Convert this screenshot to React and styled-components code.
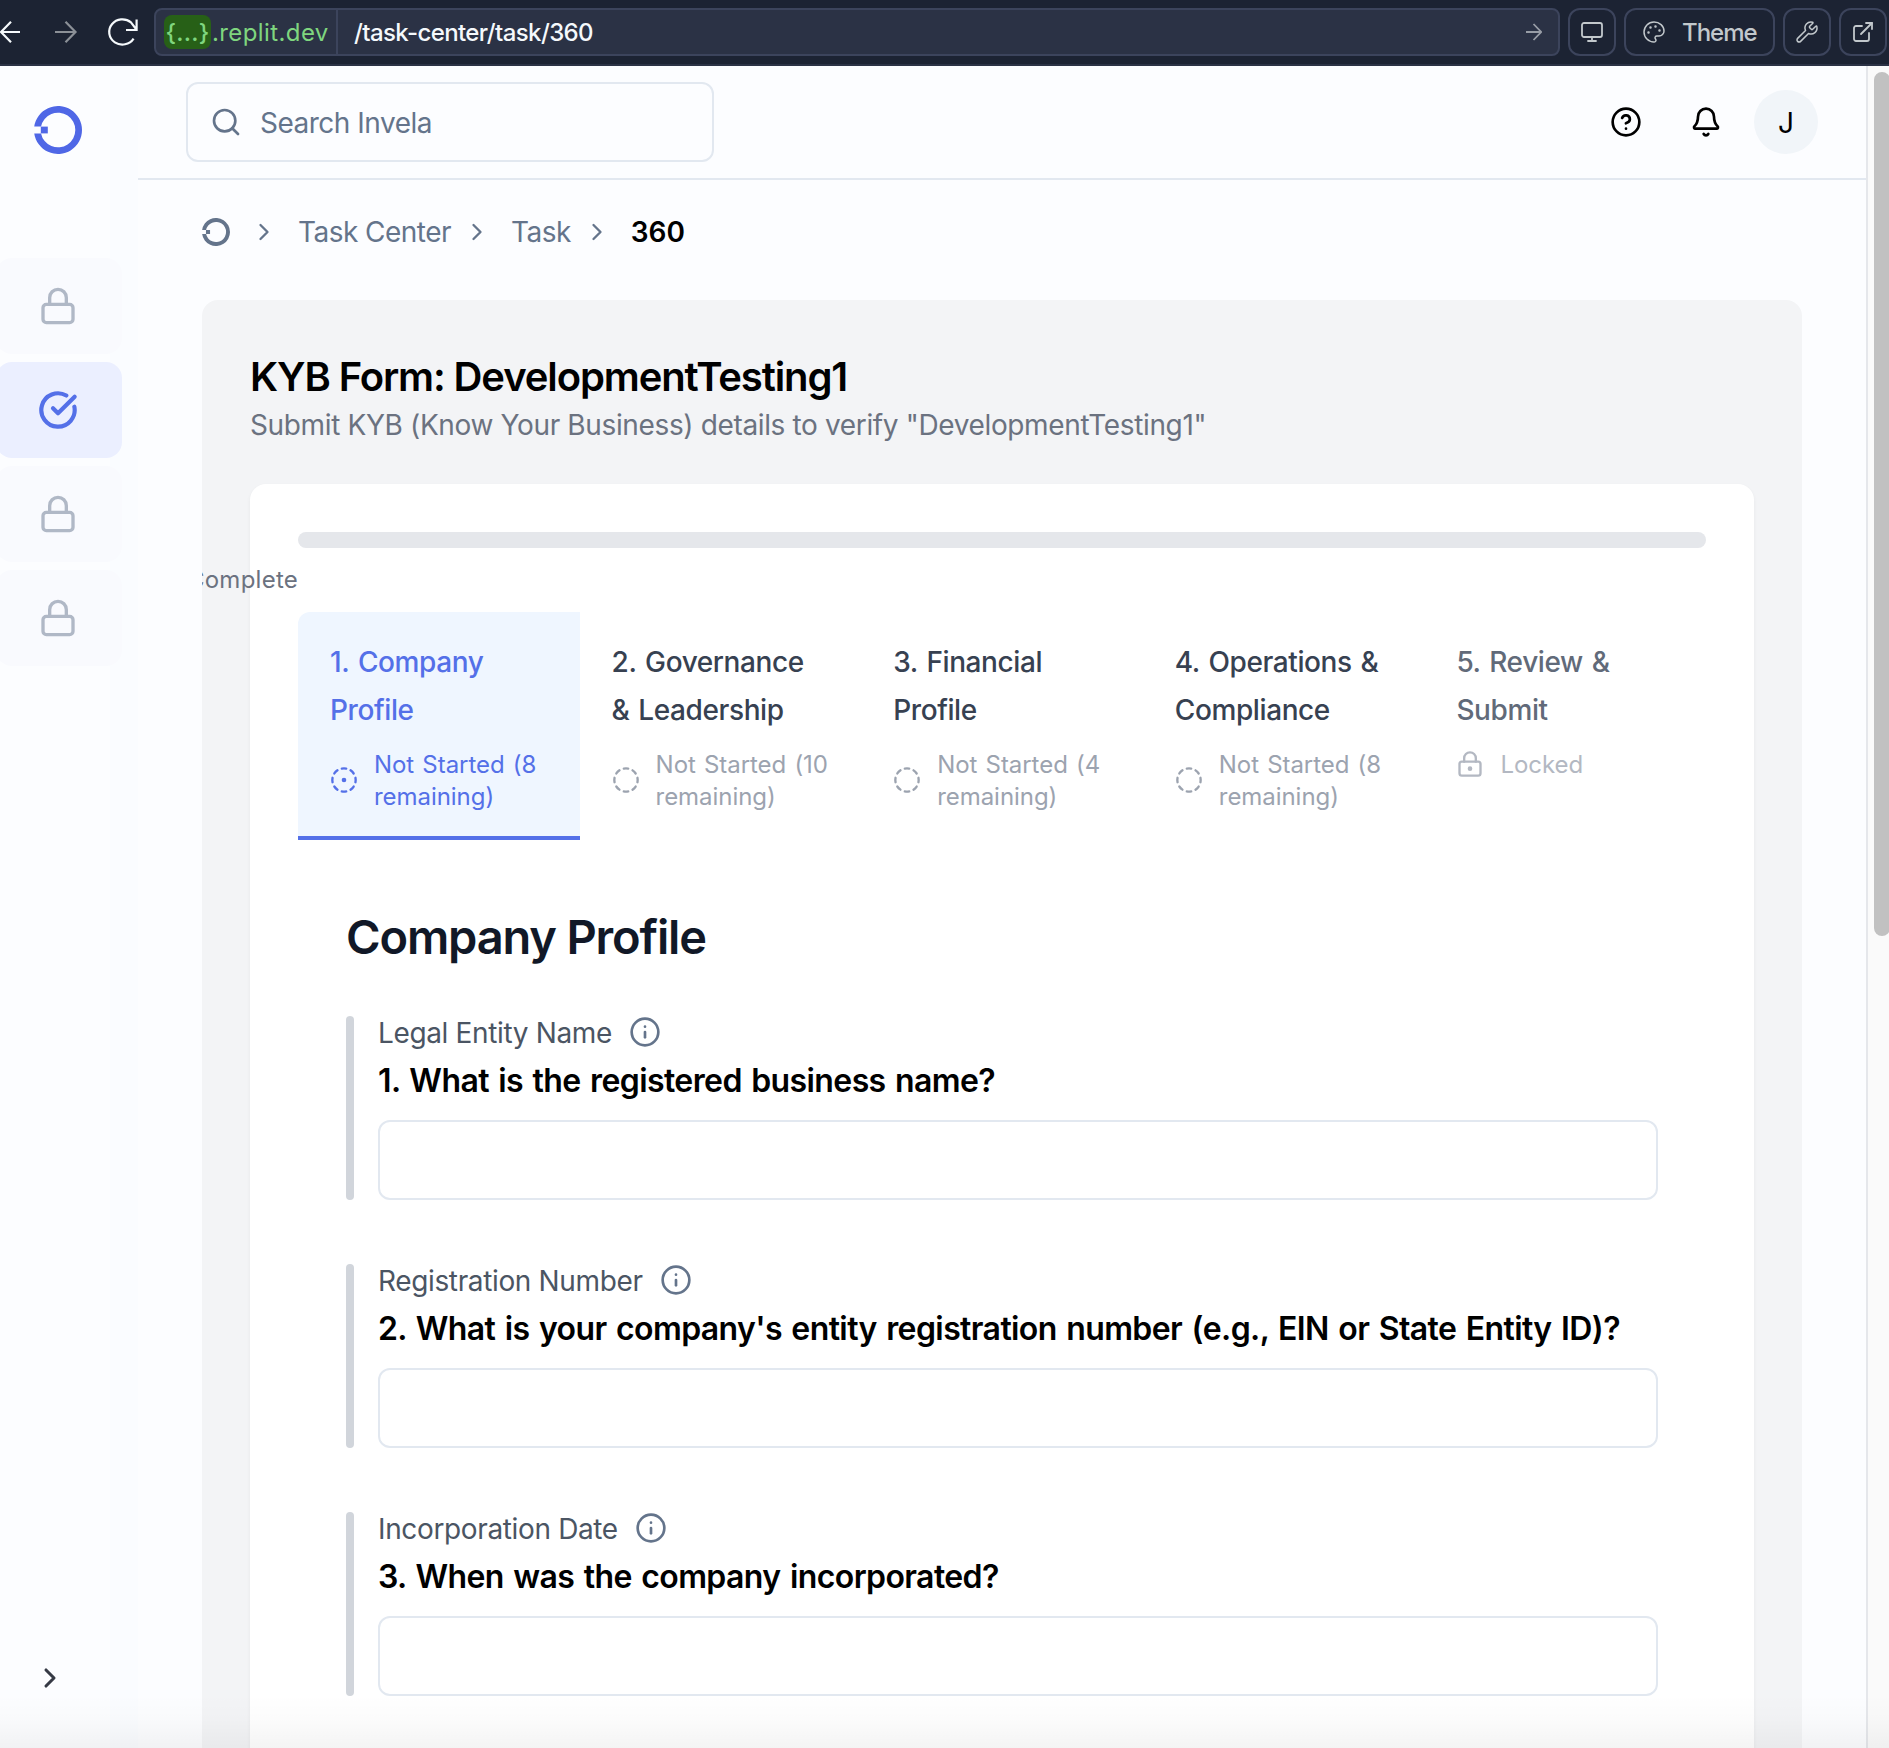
import React from "react";
import styled, { createGlobalStyle, css } from "styled-components";
import {
  Bell,
  ChevronRight,
  CircleCheckBig,
  CircleDashed,
  CircleDotDashed,
  CircleHelp,
  ExternalLink,
  Info,
  Lock,
  LockKeyhole,
  Monitor,
  Palette,
  Search,
  Wrench,
} from "lucide-react";

const GlobalStyle = createGlobalStyle`
  *, *::before, *::after { box-sizing: border-box; }
  body {
    margin: 0;
    overflow: hidden;
    background: #fcfdff;
    color: #000;
    font-family: Inter, "Liberation Sans", sans-serif;
  }
  svg { display: block; flex-shrink: 0; }
  h1, h2, p { margin: 0; }
`;

const Window = styled.div`
  display: flex;
  flex-direction: column;
  width: 1889px;
  height: 1748px;
  overflow: hidden;
  position: relative;
`;

/* ---------- Browser bar ---------- */

const BrowserBar = styled.header`
  display: flex;
  align-items: center;
  flex: none;
  height: 66px;
  padding: 0 2px 0 0;
  background: #1c2333;
  border-bottom: 2px solid #2b3245;
`;

const NavIcons = styled.div`
  width: 154px;
  flex: none;
`;

const AddressBar = styled.div`
  display: flex;
  align-items: center;
  flex: 1;
  height: 48px;
  margin-right: 8px;
  background: #2b3245;
  border: 2px solid #3c445c;
  border-radius: 8px;
  font-size: 24px;
  font-weight: 500;
  overflow: hidden;
`;

const Host = styled.div`
  display: flex;
  align-items: center;
  gap: 1px;
  width: 182px;
  height: 100%;
  padding-left: 8px;
  border-right: 2px solid #3c445c;
  color: #7fd67f;
  font-weight: 400;
  letter-spacing: 0.4px;
`;

const HostPill = styled.span`
  display: flex;
  align-items: center;
  justify-content: center;
  width: 47px;
  height: 34px;
  border-radius: 8px;
  background: #276017;
  font-weight: 500;
  letter-spacing: 0.2px;
`;

const Path = styled.span`
  flex: 1;
  padding: 1px 0 0 16px;
  color: #f5f9fc;
  letter-spacing: -0.6px;
`;

const HostName = styled.span`
  padding-top: 1px;
`;

const GoIcon = styled.div`
  padding-right: 16px;
`;

const BarButtons = styled.div`
  display: flex;
  gap: 8px;
`;

const BarButton = styled.button`
  display: flex;
  align-items: center;
  justify-content: ${(p) => (p.$wide ? "flex-start" : "center")};
  gap: 16px;
  width: ${(p) => (p.$wide ? 151 : 48)}px;
  height: 48px;
  padding: ${(p) => (p.$wide ? "0 0 0 16px" : 0)};
  border: 2px solid #3c445c;
  border-radius: 12px;
  background: transparent;
  color: #c2c8cc;
  font: 500 24px Inter, sans-serif;
  letter-spacing: -1px;
`;

const ButtonText = styled.span`
  padding-top: 1px;
`;

/* ---------- App shell ---------- */

const Shell = styled.div`
  display: flex;
  flex: 1;
  min-height: 0;
`;

const Sidebar = styled.aside`
  display: flex;
  flex-direction: column;
  flex: none;
  width: 138px;
  background: linear-gradient(to right, #fcfdff 0 110px, #fafcff 110px);
`;

const SidebarLogo = styled.div`
  padding: 40px 0 104px 34px;
`;

const SidebarNav = styled.nav`
  display: flex;
  flex-direction: column;
  gap: 8px;
`;

const SidebarItem = styled.div`
  display: flex;
  align-items: center;
  width: 126px;
  height: 96px;
  margin-left: -4px;
  padding-left: 42px;
  border-radius: 16px;
  background: ${(p) => (p.$active ? "#ebefff" : "#f9fafe")};
  color: ${(p) => (p.$active ? "#5470e8" : "#b0b8c6")};
`;

const SidebarToggle = styled.div`
  margin-top: auto;
  padding: 0 0 54px 34px;
  color: #363a45;
`;

const Main = styled.main`
  display: flex;
  flex-direction: column;
  flex: 1;
  min-width: 0;
  border-right: 2px solid #e5e7eb;
`;

const ScrollTrack = styled.div`
  flex: none;
  width: 21px;
  padding: 6px 0 0 6px;
  background: #fafafa;
`;

const ScrollThumb = styled.div`
  width: 16px;
  height: 864px;
  border-radius: 8px;
  background: #c1c1c1;
`;

const TopBar = styled.div`
  display: flex;
  align-items: center;
  flex: none;
  height: 114px;
  padding: 0 48px;
  border-bottom: 2px solid #e2e8f0;
`;

const SearchBox = styled.div`
  display: flex;
  align-items: center;
  gap: 18px;
  width: 528px;
  height: 80px;
  padding-left: 22px;
  border: 2px solid #e2e8f0;
  border-radius: 12px;
  color: #64748b;
  font-size: 28px;
  letter-spacing: -0.5px;
`;

const SearchText = styled.span`
  padding-top: 2px;
`;

const TopActions = styled.div`
  display: flex;
  align-items: center;
  gap: 48px;
  margin-left: auto;
`;

const Avatar = styled.div`
  display: flex;
  align-items: center;
  justify-content: center;
  width: 64px;
  height: 64px;
  margin-left: -16px;
  padding-top: 1px;
  border-radius: 50%;
  background: #f1f5f9;
  font-size: 28px;
`;

const Breadcrumbs = styled.nav`
  display: flex;
  align-items: center;
  flex: none;
  height: 104px;
  padding-left: 64px;
  color: #64748b;
  font-size: 28px;
  letter-spacing: -0.53px;
`;

const Crumb = styled.span`
  margin-left: ${(p) => p.$gap}px;
  ${(p) =>
    p.$current &&
    css`
      color: #000;
      font-weight: 600;
      letter-spacing: 0;
    `}
`;

const CrumbArrow = styled.span`
  margin-left: ${(p) => p.$gap}px;
`;

/* ---------- Task panel ---------- */

const Panel = styled.section`
  flex: 1;
  margin: 16px 64px 0;
  padding: 48px 48px 0;
  border-radius: 16px 16px 0 0;
  background: #f3f4f6;
  overflow: hidden;
`;

const PanelTitle = styled.h1`
  padding-top: 1px;
  font-size: 40px;
  line-height: 56px;
  font-weight: 600;
  letter-spacing: -1.12px;
`;

const PanelSubtitle = styled.p`
  margin-bottom: 39px;
  padding-top: 1px;
  color: #6b7280;
  font-size: 28px;
  line-height: 39px;
  letter-spacing: -0.36px;
`;

const Card = styled.div`
  height: 1400px;
  padding: 48px;
  border-radius: 16px;
  background: #fff;
  box-shadow: 0 2px 4px rgba(0, 0, 0, 0.05);
`;

const ProgressTrack = styled.div`
  height: 16px;
  border-radius: 8px;
  background: #e5e7eb;
`;

const ProgressLabel = styled.div`
  display: flex;
  justify-content: flex-end;
  width: 0;
  height: 32px;
  margin: 16px 0;
  color: #6b7280;
  font-size: 24px;
  line-height: 32px;
  letter-spacing: 0.25px;
  white-space: nowrap;
`;

const Steps = styled.div`
  display: grid;
  grid-template-columns: repeat(5, 1fr);
  height: 228px;
`;

const Step = styled.div`
  padding: 26px 32px 0;
  border-bottom: 4px solid ${(p) => (p.$state === "active" ? "#5470e8" : "transparent")};
  border-top-left-radius: ${(p) => (p.$state === "active" ? 12 : 0)}px;
  background: ${(p) => (p.$state === "active" ? "#eff6ff" : "transparent")};
  color: ${(p) => ({ active: "#5470e8", locked: "#616a79" })[p.$state] || "#374151"};
`;

const StepTitle = styled.div`
  font-size: 28px;
  line-height: 48px;
  font-weight: 500;
  letter-spacing: -0.4px;
  word-spacing: 1.8px;
  white-space: pre;
`;

const StepStatus = styled.div`
  display: flex;
  align-items: center;
  gap: 16px;
  margin-top: 14px;
  color: ${(p) => ({ active: "#5470e8", locked: "#b3b8c2" })[p.$state] || "#9ca3af"};
  font-size: 24px;
  line-height: 32px;
  letter-spacing: -0.05px;
  word-spacing: 1.5px;
  white-space: pre;
`;

const StatusText = styled.span`
  position: relative;
  top: 1px;
`;

const Form = styled.div`
  padding: 64px 48px 0;
`;

const FormTitle = styled.h2`
  margin-bottom: 46px;
  color: #111827;
  font-size: 47px;
  line-height: 66px;
  font-weight: 600;
  letter-spacing: -1.17px;
`;

const Field = styled.div`
  display: flex;
  gap: 24px;
  height: 184px;
  margin-bottom: 64px;
`;

const FieldMarker = styled.div`
  flex: none;
  width: 8px;
  border-radius: 4px;
  background: #d1d5db;
`;

const FieldBody = styled.div`
  display: flex;
  flex-direction: column;
  flex: 1;
`;

const FieldLabel = styled.div`
  display: flex;
  align-items: center;
  gap: 17px;
  height: 32px;
  color: #4b5563;
  font-size: 28px;
  letter-spacing: -0.36px;

  svg { color: #64748b; }
`;

const LabelText = styled.span`
  padding-top: 1px;
`;

const Question = styled.div`
  height: 72px;
  padding-top: 9px;
  font-size: 32px;
  line-height: 48px;
  font-weight: 600;
  letter-spacing: -0.6px;
  word-spacing: 2px;
  white-space: nowrap;
`;

const TextInput = styled.input`
  width: 100%;
  height: 80px;
  border: 2px solid #e2e8f0;
  border-radius: 12px;
  background: #fff;
`;

const BottomShade = styled.div`
  position: absolute;
  left: 0;
  right: 0;
  bottom: 0;
  height: 54px;
  background: linear-gradient(to bottom, rgba(0, 0, 0, 0), rgba(0, 0, 0, 0.012) 45%, rgba(0, 0, 0, 0.045));
  pointer-events: none;
`;

/* ---------- Drawings ---------- */

const Logo = ({ size, color }) => (
  <svg width={size} height={size} viewBox="0 0 48 48" fill={color}>
    <path d="M.24 20.6A24 24 0 1 1 .24 27.4H7.04A17.3 17.3 0 1 0 7.04 20.6Z" />
    <rect x="6.8" y="20.6" width="7" height="6.8" />
  </svg>
);

const BrowserNav = () => (
  <svg width="154" height="48" viewBox="0 8 154 48" fill="none" strokeWidth="2.2">
    <path stroke="#f5f9fc" d="M20 32H1M11 21.8L1 32L11 42.2" />
    <path stroke="#8b9097" d="M55 32H75M65.5 21.8L75.5 32L65.5 42.2" />
    <path stroke="#f5f9fc" d="M133.6 38.6A13.2 12.6 0 1 1 131 22.4L136.4 29.5M136.6 19.6V30H126" />
  </svg>
);

const GoArrow = () => (
  <svg width="16" height="18" viewBox="0 0 16 18" fill="none" stroke="#989da6" strokeWidth="1.8">
    <path d="M0 9H15M7.5 1L15.2 9L7.5 17" />
  </svg>
);

const SIDEBAR = [false, true, false, false];

const STEPS = [
  { title: "1. Company\nProfile", status: "Not Started (8\nremaining)", state: "active", Icon: CircleDotDashed },
  { title: "2. Governance\n& Leadership", status: "Not Started (10\nremaining)", state: "idle", Icon: CircleDashed },
  { title: "3. Financial\nProfile", status: "Not Started (4\nremaining)", state: "idle", Icon: CircleDashed },
  { title: "4. Operations &\nCompliance", status: "Not Started (8\nremaining)", state: "idle", Icon: CircleDashed },
  { title: "5. Review &\nSubmit", status: "Locked", state: "locked", Icon: LockKeyhole },
];

const FIELDS = [
  { label: "Legal Entity Name", question: "1. What is the registered business name?" },
  {
    label: "Registration Number",
    question: "2. What is your company's entity registration number (e.g., EIN or State Entity ID)?",
  },
  { label: "Incorporation Date", question: "3. When was the company incorporated?" },
];

export default function App() {
  return (
    <Window>
      <GlobalStyle />
      <BrowserBar>
        <NavIcons>
          <BrowserNav />
        </NavIcons>
        <AddressBar>
          <Host>
            <HostPill>{"{...}"}</HostPill>
            <HostName>.replit.dev</HostName>
          </Host>
          <Path>/task-center/task/360</Path>
          <GoIcon>
            <GoArrow />
          </GoIcon>
        </AddressBar>
        <BarButtons>
          <BarButton>
            <Monitor size={24} strokeWidth={1.8} />
          </BarButton>
          <BarButton $wide>
            <Palette size={24} strokeWidth={1.5} />
            <ButtonText>Theme</ButtonText>
          </BarButton>
          <BarButton>
            <Wrench size={24} strokeWidth={1.5} />
          </BarButton>
          <BarButton>
            <ExternalLink size={24} strokeWidth={1.8} />
          </BarButton>
        </BarButtons>
      </BrowserBar>

      <Shell>
        <Sidebar>
          <SidebarLogo>
            <Logo size={48} color="#4f67e6" />
          </SidebarLogo>
          <SidebarNav>
            {SIDEBAR.map((active, i) => (
              <SidebarItem key={i} $active={active}>
                {active ? <CircleCheckBig size={40} strokeWidth={2.5} /> : <Lock size={40} strokeWidth={2} />}
              </SidebarItem>
            ))}
          </SidebarNav>
          <SidebarToggle>
            <ChevronRight size={32} strokeWidth={2.3} />
          </SidebarToggle>
        </Sidebar>

        <Main>
          <TopBar>
            <SearchBox>
              <Search size={32} strokeWidth={2} />
              <SearchText>Search Invela</SearchText>
            </SearchBox>
            <TopActions>
              <CircleHelp size={32} />
              <Bell size={32} />
              <Avatar>J</Avatar>
            </TopActions>
          </TopBar>

          <Breadcrumbs>
            <Logo size={28} color="#64748b" />
            <CrumbArrow $gap={20}>
              <ChevronRight size={28} />
            </CrumbArrow>
            <Crumb $gap={20}>Task Center</Crumb>
            <CrumbArrow $gap={12}>
              <ChevronRight size={28} />
            </CrumbArrow>
            <Crumb $gap={20}>Task</Crumb>
            <CrumbArrow $gap={12}>
              <ChevronRight size={28} />
            </CrumbArrow>
            <Crumb $gap={20} $current>
              360
            </Crumb>
          </Breadcrumbs>

          <Panel>
            <PanelTitle>KYB Form: DevelopmentTesting1</PanelTitle>
            <PanelSubtitle>Submit KYB (Know Your Business) details to verify "DevelopmentTesting1"</PanelSubtitle>
            <Card>
              <ProgressTrack />
              <ProgressLabel>Complete</ProgressLabel>
              <Steps>
                {STEPS.map(({ title, status, state, Icon }) => (
                  <Step key={title} $state={state}>
                    <StepTitle>{title}</StepTitle>
                    <StepStatus $state={state}>
                      <Icon size={28} />
                      <StatusText>{status}</StatusText>
                    </StepStatus>
                  </Step>
                ))}
              </Steps>
              <Form>
                <FormTitle>Company Profile</FormTitle>
                {FIELDS.map((f) => (
                  <Field key={f.label}>
                    <FieldMarker />
                    <FieldBody>
                      <FieldLabel>
                        <LabelText>{f.label}</LabelText>
                        <Info size={32} />
                      </FieldLabel>
                      <Question>{f.question}</Question>
                      <TextInput type="text" />
                    </FieldBody>
                  </Field>
                ))}
              </Form>
            </Card>
          </Panel>
        </Main>

        <ScrollTrack>
          <ScrollThumb />
        </ScrollTrack>
      </Shell>
      <BottomShade />
    </Window>
  );
}
